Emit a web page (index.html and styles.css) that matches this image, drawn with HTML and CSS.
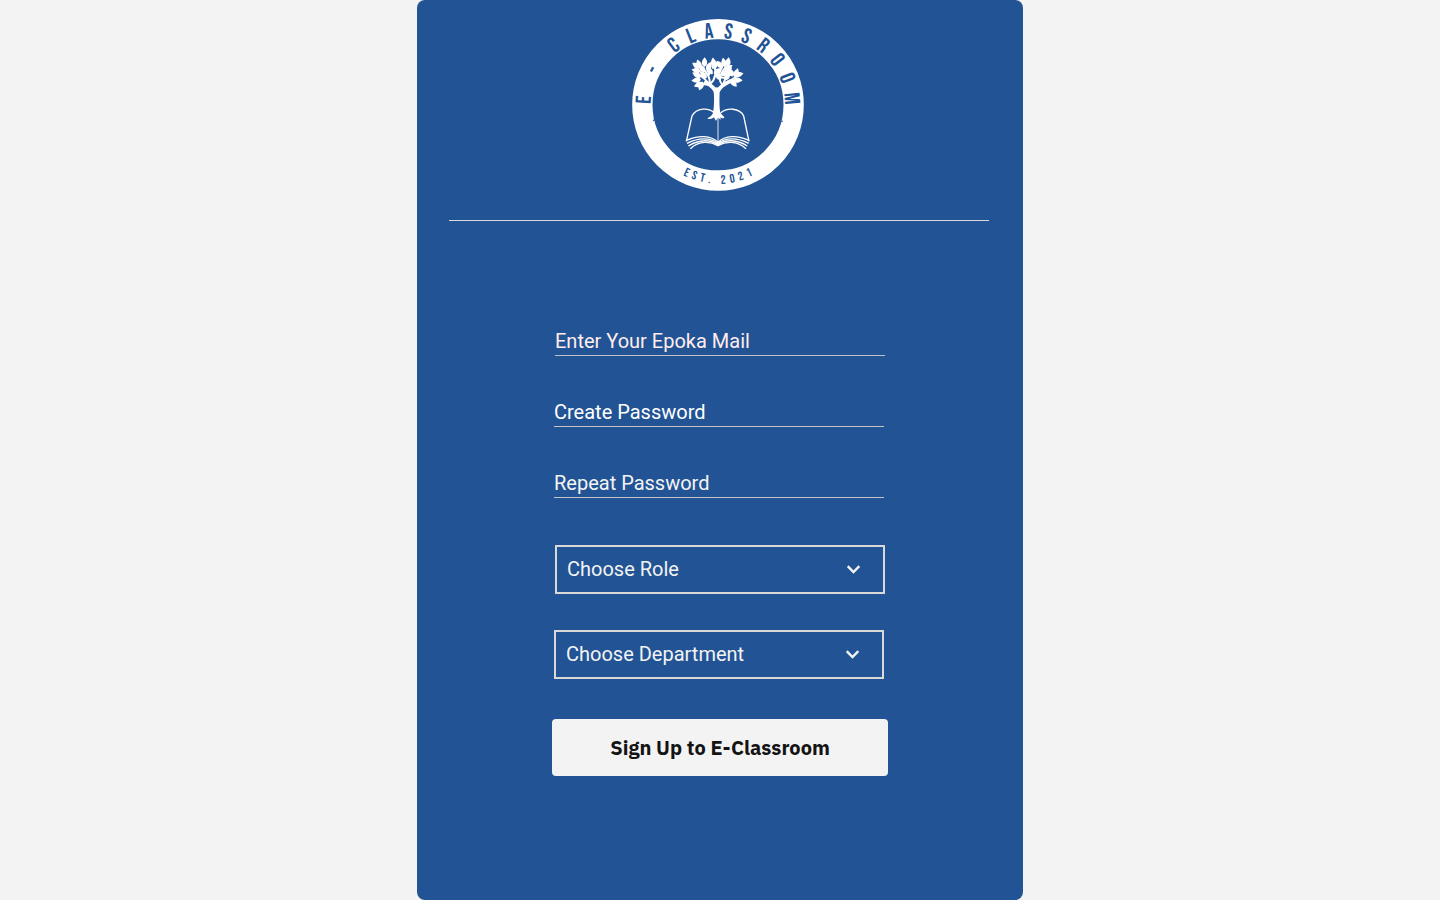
FILE: index.html
```html
<!DOCTYPE html>
<html lang="en">
<head>
<meta charset="utf-8">
<title>E-Classroom Sign Up</title>
<link rel="stylesheet" href="styles.css">
</head>
<body>
<main class="card">
  <header class="brand">
    <svg class="logo" viewBox="0 0 600 570" role="img" aria-label="E-Classroom">
      <defs><path id="leaf" d="M0 3C-12-5-9-15 0-26C9-15 12-5 0 3Z"/></defs>
      <circle class="ring" cx="294" cy="284.5" r="227"/>
      <g class="arc arc-top">
        <text transform="rotate(-86.2 294 284) translate(294 82)">E</text>
        <text transform="rotate(-61.8 294 284) translate(294 82)">-</text>
        <text transform="rotate(-36.7 294 284) translate(294 82)">C</text>
        <text transform="rotate(-21.6 294 284) translate(294 83)">L</text>
        <text transform="rotate(-7.2 294 284) translate(294 83)">A</text>
        <text transform="rotate(8.2 294 284) translate(294 84)">S</text>
        <text transform="rotate(22.6 294 284) translate(294 83)">S</text>
        <text transform="rotate(37.4 294 284) translate(294 82)">R</text>
        <text transform="rotate(52.9 294 284) translate(294 82)">O</text>
        <text transform="rotate(68.8 294 284) translate(294 83)">O</text>
        <text transform="rotate(85.2 294 284) translate(294 83)">M</text>
      </g>
      <g class="arc arc-bottom">
        <text transform="rotate(24.7 294 284) translate(294 520)">E</text>
        <text transform="rotate(18.4 294 284) translate(294 520)">S</text>
        <text transform="rotate(12 294 284) translate(294 520)">T</text>
        <text transform="rotate(6.4 294 284) translate(294 521)">.</text>
        <text transform="rotate(-4 294 284) translate(294 522)">2</text>
        <text transform="rotate(-10.9 294 284) translate(294 522)">0</text>
        <text transform="rotate(-17.5 294 284) translate(294 521)">2</text>
        <text transform="rotate(-24.6 294 284) translate(294 520)">1</text>
      </g>
      <circle class="speck" cx="101" cy="331" r="2.5"/>
      <circle class="speck" cx="486" cy="334" r="2.5"/>
      <path class="solid" d="M281 246L276 236L290 232L304 236L299 246C298 270 298 295 301 307C304 315 313 319 313 323C307 327 302 323 299 321L304 329L294 324L287 332L282 322C275 329 267 327 262 326C266 321 277 318 279 308C283 290 283 262 281 246Z"/>
      <g class="branch">
        <path class="limb" d="M287 242C278 228 266 222 253 214M294 242C304 226 316 220 332 213"/>
        <path d="M268 224C253 223 247 221 236 225M268 222C273 205 261 190 248 173M262 216C251 199 239 199 230 187M270 222C288 207 291 190 282 164M265 198C270 186 272 177 267 163M308 225C290 207 304 188 318 170M310 221C316 201 329 195 333 173M316 219C334 210 345 204 355 196M326 213C341 211 348 212 356 215M281 203C297 193 304 183 306 167M298 198C307 207 323 203 335 190M240 208C234 206 231 207 226 207"/>
      </g>
      <g class="solid">
        <use href="#leaf" transform="translate(238 173) rotate(-55)"/>
        <use href="#leaf" transform="translate(240 184) rotate(-78)"/>
        <use href="#leaf" transform="translate(240 173) rotate(-18)"/>
        <use href="#leaf" transform="translate(253 168) rotate(3)"/>
        <use href="#leaf" transform="translate(262 178) rotate(28)"/>
        <use href="#leaf" transform="translate(252 185) rotate(-30)"/>
        <use href="#leaf" transform="translate(240 200) rotate(-62)"/>
        <use href="#leaf" transform="translate(240 209) rotate(-98)"/>
        <use href="#leaf" transform="translate(246 220) rotate(-112)"/>
        <use href="#leaf" transform="translate(247 217) rotate(-158)"/>
        <use href="#leaf" transform="translate(258 202) rotate(-45)"/>
        <use href="#leaf" transform="translate(282 168) rotate(-8)"/>
        <use href="#leaf" transform="translate(278 174) rotate(42)"/>
        <use href="#leaf" transform="translate(276 190) rotate(-45)"/>
        <use href="#leaf" transform="translate(284 190) rotate(55)"/>
        <use href="#leaf" transform="translate(306 173) rotate(-38)"/>
        <use href="#leaf" transform="translate(322 167) rotate(10)"/>
        <use href="#leaf" transform="translate(314 169) rotate(-12)"/>
        <use href="#leaf" transform="translate(316 180) rotate(55)"/>
        <use href="#leaf" transform="translate(306 195) rotate(55)"/>
        <use href="#leaf" transform="translate(300 208) rotate(-25)"/>
        <use href="#leaf" transform="translate(318 208) rotate(20)"/>
        <use href="#leaf" transform="translate(338 197) rotate(-28)"/>
        <use href="#leaf" transform="translate(345 199) rotate(20)"/>
        <use href="#leaf" transform="translate(345 196) rotate(76)"/>
        <use href="#leaf" transform="translate(342 210) rotate(92)"/>
        <use href="#leaf" transform="translate(334 210) rotate(142)"/>
      </g>
      <g class="book">
        <path d="M199 394L216 318C229 292 267 292 283 309M302 309C320 292 359 293 371 318L387 394"/>
        <path class="spine" d="M294 325V400"/>
        <path class="page" d="M198 392C234 375 273 375 294 397C315 375 353 375 388 392"/>
        <path class="page" d="M201 400C236 382 272 382 294 401C316 382 351 382 386 400"/>
        <path class="page" d="M205 408C238 387 271 388 294 404C317 388 350 387 382 408"/>
        <path class="page" d="M211 416C238 391 271 394 294 407C317 394 350 391 378 416"/>
      </g>
    </svg>
  </header>
  <hr class="rule">
  <form class="form">
    <div class="field warm shift">Enter Your Epoka Mail</div>
    <div class="field bright">Create Password</div>
    <div class="field">Repeat Password</div>
    <div class="select shift">
      <span class="choice">Choose Role</span>
      <svg class="chevron" viewBox="0 0 14 9"><path d="M.7 1.2L6.5 7L12.3 1.2"/></svg>
    </div>
    <div class="select second">
      <span class="choice">Choose Department</span>
      <svg class="chevron" viewBox="0 0 14 9"><path d="M.7 1.2L6.5 7L12.3 1.2"/></svg>
    </div>
    <button class="submit" type="button">Sign Up to E-Classroom</button>
  </form>
</main>
</body>
</html>
```
FILE: styles.css
```css
* { box-sizing: border-box; }
body {
  margin: 0;
  background: #f3f3f3;
  font-family: Roboto, sans-serif;
}
.card {
  width: 606px;
  height: 900px;
  margin: 0 auto;
  background: #225395;
  border-radius: 8px;
}
.brand { padding: 10px 0 0 203px; }
.logo { display: block; width: 200px; height: 190px; }
.ring { fill: none; stroke: #fff; stroke-width: 61; }
.arc {
  fill: #225395;
  font-family: "Bebas Neue", "Roboto Condensed", Roboto, sans-serif;
  text-anchor: middle;
}
.arc-top { font-size: 65px; }
.arc-bottom { font-size: 37px; }
.speck { fill: #225395; }
.solid { fill: #fff; }
.branch { fill: none; stroke: #fff; stroke-width: 6; }
.limb { stroke-width: 11; }
.book { fill: none; stroke: #fff; stroke-width: 4; }
.spine { stroke-width: 2.6; }
.page { stroke-width: 4.2; }
.rule {
  width: 540px;
  height: 1px;
  margin: 20px 0 0 32px;
  border: 0;
  background: #d9d9d9;
}
.form {
  display: flex;
  flex-direction: column;
  width: 336px;
  margin: 105px 0 0 135px;
  padding-left: 2px;
}
.field {
  width: 330px;
  height: 30px;
  margin-bottom: 41px;
  border-bottom: 1px solid #c4c4c4;
  color: #f3f3f3;
  font-size: 20px;
  line-height: 30px;
}
.warm { color: #ffeded; }
.bright { color: #fff; }
.shift { margin-left: 1px; }
.select {
  display: flex;
  align-items: center;
  justify-content: space-between;
  width: 330px;
  height: 49px;
  margin-top: 6px;
  padding: 0 22px 0 10px;
  border: 2px solid #d9d9d9;
  color: #f3f3f3;
  font-size: 20px;
}
.choice { padding-bottom: 2px; }
.second { margin-top: 36px; }
.chevron {
  width: 14px;
  height: 9px;
  fill: none;
  stroke: #f3f3f3;
  stroke-width: 2.4;
}
.submit {
  width: 336px;
  height: 57px;
  margin: 40px 0 0 -2px;
  padding: 0;
  border: 0;
  border-radius: 4px;
  background: #f3f3f3;
  color: #141414;
  font: 700 20px "IBM Plex Sans", "Noto Sans", sans-serif;
}
```
